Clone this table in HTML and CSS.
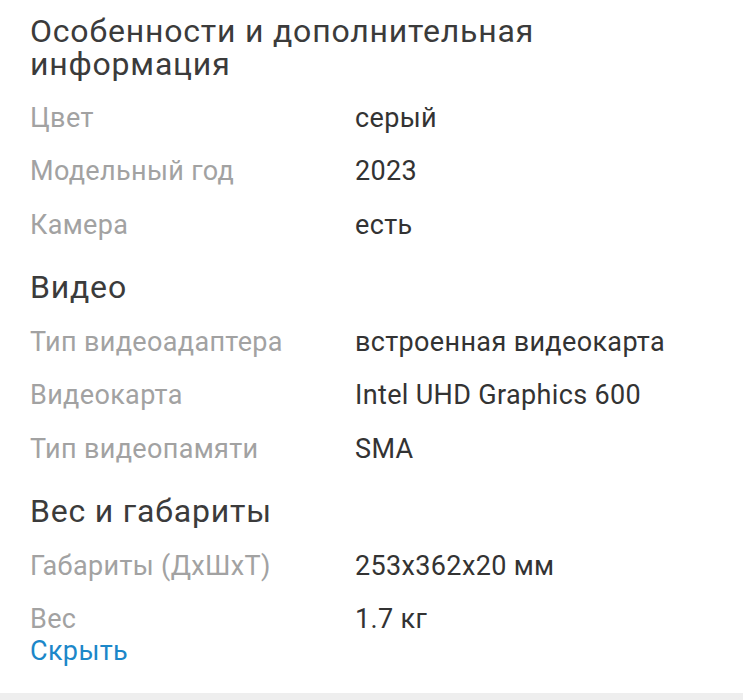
FILE: index.html
```html
<!DOCTYPE html>
<html lang="ru">
<head>
<meta charset="utf-8">
<link rel="stylesheet" href="styles.css">
</head>
<body>
<div class="page">
  <section class="card">
    <h2 class="title">Особенности и дополнительная информация</h2>
    <dl class="specs">
      <div class="row"><dt>Цвет</dt><dd>серый</dd></div>
      <div class="row"><dt>Модельный год</dt><dd>2023</dd></div>
      <div class="row"><dt>Камера</dt><dd>есть</dd></div>
    </dl>
    <h3 class="group">Видео</h3>
    <dl class="specs">
      <div class="row"><dt>Тип видеоадаптера</dt><dd>встроенная видеокарта</dd></div>
      <div class="row"><dt>Видеокарта</dt><dd>Intel UHD Graphics 600</dd></div>
      <div class="row"><dt>Тип видеопамяти</dt><dd>SMA</dd></div>
    </dl>
    <h3 class="group">Вес и габариты</h3>
    <dl class="specs">
      <div class="row"><dt>Габариты (ДхШхТ)</dt><dd>253x362x20 мм</dd></div>
      <div class="row"><dt>Вес</dt><dd>1.7 кг</dd></div>
    </dl>
    <a class="toggle" href="#">Скрыть</a>
  </section>
  <div class="divider"></div>
</div>
</body>
</html>
```
FILE: styles.css
```css
* { box-sizing: border-box; }
html, body { margin: 0; padding: 0; background: #ffffff; }
body { font-family: Roboto, "Noto Sans", sans-serif; color: #333333; }
.page { display: flex; flex-direction: column; height: 700px; }
.card { padding: 14.5px 30px 0 30px; flex: 1; }
.title { margin: 0 0 21px 0; max-width: 600px; font-size: 32px; font-weight: 400; line-height: 33px; letter-spacing: 0.8px; color: #3b3b3b; }
.group { margin: 28px 0 21px 0; font-size: 32px; font-weight: 400; line-height: 36px; letter-spacing: 0.8px; color: #3b3b3b; }
.specs { margin: 0; display: flex; flex-direction: column; gap: 21.5px; }
.row { display: grid; grid-template-columns: 325px 1fr; }
.row dt, .row dd { margin: 0; font-size: 27px; line-height: 32px; letter-spacing: 0.35px; }
.row dt { color: #a2a2a2; }
.row dd { color: #333333; }
.toggle { display: block; font-size: 27px; line-height: 32px; letter-spacing: 0.35px; color: #1c87c9; text-decoration: none; }
.divider { height: 7px; background: #eeeeee; }
```
